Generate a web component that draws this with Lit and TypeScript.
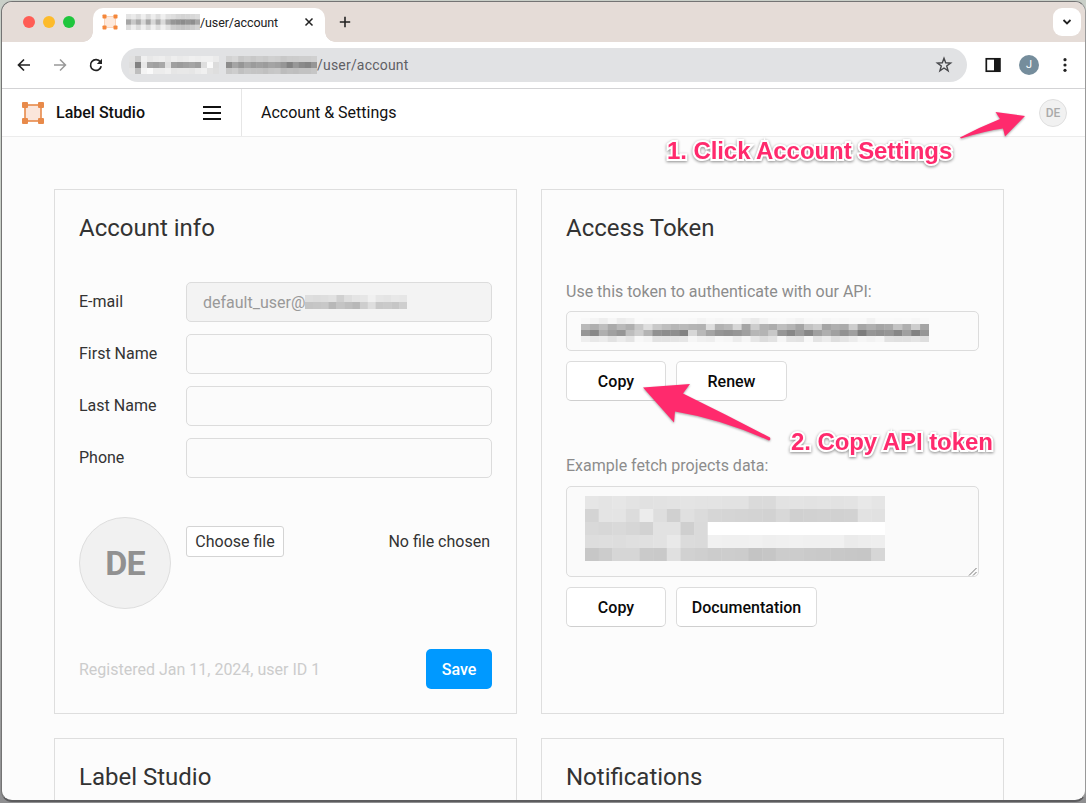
import { LitElement, html, svg, css } from "lit";
import { customElement } from "lit/decorators.js";

type Cells = number[][];

/* Redacted text: a grid of grey levels, one row of cells per line. */
const mosaic = (rows: Cells, w: number, h: number) => {
  const ch = h / rows.length;
  return html`<svg class="mosaic" width=${w} height=${h} viewBox="0 0 ${w} ${h}">
    ${rows.map((r, y) => r.map((v, x) => svg`<rect x=${(x * w) / r.length} y=${y * ch} width=${Math.min(w / r.length + 0.4, w - (x * w) / r.length)} height=${ch + (y < rows.length - 1 ? 0.4 : 0)} fill="rgb(${v},${v},${v})"></rect>`))}
  </svg>`;
};

const TAB: Cells = [
  [228, 235, 222, 240, 220, 238, 222, 240, 225, 222, 215, 212, 214, 216, 220],
  [165, 200, 170, 215, 165, 215, 172, 218, 172, 150, 145, 140, 148, 142, 165],
  [220, 238, 220, 240, 220, 240, 222, 240, 225, 205, 200, 196, 200, 204, 212],
];
const URL_A: Cells = [
  [225, 205, 240, 232, 236, 238, 232, 238, 234, 236, 240, 238, 240, 240, 235],
  [222, 130, 232, 165, 160, 168, 224, 160, 155, 160, 165, 158, 222, 250, 220],
  [228, 190, 244, 250, 236, 236, 240, 230, 232, 232, 230, 236, 240, 226, 222],
];
const URL_B: Cells = [
  [210, 215, 200, 205, 200, 205, 202, 208, 206, 200, 204, 204, 206, 206, 208],
  [140, 165, 150, 165, 155, 160, 156, 164, 160, 150, 130, 152, 138, 132, 150],
  [200, 205, 192, 198, 196, 196, 192, 198, 200, 188, 192, 190, 194, 194, 198],
];
const MAIL: Cells = [
  [222, 220, 222, 225, 208, 222, 228, 230, 240, 230, 228, 232, 230],
  [196, 198, 200, 184, 196, 190, 184, 206, 222, 200, 202, 198, 206],
];
const TOKEN: Cells = [
  [248, 244, 238, 246, 236, 240, 250, 248, 249, 249, 249, 249, 248, 244, 248, 246, 248, 249, 240, 234, 242, 248, 249, 246, 242, 248, 249, 246, 248, 247, 249, 249, 242, 249, 249, 248, 249, 246, 249],
  [185, 175, 190, 170, 185, 175, 200, 222, 200, 190, 182, 185, 180, 178, 222, 178, 185, 215, 165, 205, 178, 172, 190, 180, 165, 195, 205, 165, 175, 170, 205, 165, 175, 165, 170, 195, 175, 205, 165],
  [150, 135, 175, 160, 150, 190, 205, 180, 145, 140, 142, 130, 215, 185, 165, 150, 145, 150, 160, 182, 180, 200, 150, 135, 155, 135, 160, 175, 160, 145, 160, 125, 150, 145, 150, 135, 160, 130, 150],
  [238, 232, 236, 226, 236, 228, 248, 244, 226, 226, 228, 230, 246, 240, 238, 248, 246, 236, 246, 230, 220, 226, 246, 228, 226, 248, 228, 236, 222, 228, 236, 246, 242, 246, 226, 224, 224, 228, 222],
];
const CODE: Cells = [
  [230, 228, 230, 227, 225, 226, 227, 228, 227, 227, 226, 226, 218, 218, 226, 227, 226, 227, 226, 227, 232, 229],
  [212, 228, 228, 220, 236, 222, 208, 224, 219, 214, 213, 212, 211, 210, 216, 208, 209, 210, 209, 210, 226, 225],
  [217, 215, 217, 214, 210, 226, 226, 207, 218, 255, 255, 255, 255, 255, 255, 255, 255, 255, 255, 255, 255, 255],
  [221, 222, 221, 223, 224, 226, 233, 219, 218, 241, 240, 240, 241, 239, 240, 241, 240, 240, 241, 235, 237, 238],
  [199, 204, 214, 214, 202, 201, 224, 209, 207, 204, 205, 204, 196, 198, 204, 204, 202, 201, 200, 199, 198, 214],
];

@customElement("app-root")
export class AppRoot extends LitElement {
  static styles = css`
    * { box-sizing: border-box; }
    :host { display: block; width: 1086px; height: 803px; overflow: hidden; position: relative; background: linear-gradient(#c9cfc8, #c9cfc8 50%, #8e8e90); padding: 1px 0 0 1px; font-family: Roboto, sans-serif; font-size: 16px; color: #333; }
    .window { width: 1085px; height: 801px; border: 1px solid #747474; border-right-color: #999; border-bottom: 2px solid #5c5c5e; border-radius: 11px; overflow: hidden; background: #fcfcfc; display: flex; flex-direction: column; }
    .mosaic { display: block; flex: none; }
    .tabs { height: 40px; flex: none; background: #e5dcd7; display: flex; align-items: flex-start; padding-left: 21px; }
    .lights { display: flex; gap: 8px; padding-top: 14px; width: 70px; }
    .dot { width: 12px; height: 12px; border-radius: 50%; }
    .red { background: #ff5d55; } .amber { background: #fdbb2b; } .green { background: #1fc63d; }
    .tab { margin-top: 6px; width: 232px; height: 34px; background: #fff; border-radius: 10px 10px 0 0; display: flex; align-items: center; padding: 0 0 6px 9px; position: relative; }
    .tab::before, .tab::after { content: ""; position: absolute; bottom: 0; width: 10px; height: 10px; }
    .tab::before { left: -10px; background: radial-gradient(circle at 0 0, transparent 9.5px, #fff 10px); }
    .tab::after { right: -10px; background: radial-gradient(circle at 100% 0, transparent 9.5px, #fff 10px); }
    .tab .mosaic { margin-left: 8px; }
    .tabtext { font-size: 12.5px; color: #222; letter-spacing: -0.11px; width: 104px; white-space: nowrap; }
    .plus { margin: 14px 0 0 14px; }
    .drop { margin: 6px 4px 0 auto; width: 28px; height: 28px; border-radius: 9px; background: #fff; display: grid; place-items: center; }
    .bar { height: 47px; flex: none; background: #fff; border-bottom: 1px solid #d3d3d5; display: flex; align-items: center; padding: 0 0 1px 14px; }
    .bar > svg { flex: none; }
    .nav { display: flex; gap: 20px; width: 105px; }
    .url { width: 846px; height: 34px; border-radius: 17px; background: #e1e2e4; display: flex; align-items: center; padding: 0 14px 0 8px; font-size: 14px; color: #5f6064; }
    .urltext { letter-spacing: 0.2px; flex: 1; }
    .urlgap { margin-left: 7px; }
    .panel { margin-left: 17px; }
    .me { width: 20px; height: 20px; margin: 0 23px 0 17px; border-radius: 50%; background: #758d9c; color: #fff; font-size: 11px; display: grid; place-items: center; }
    .header { height: 48px; flex: none; background: #fff; border-bottom: 1px solid #ececec; display: flex; align-items: center; color: #111; }
    .brand { width: 240px; height: 47px; border-right: 1px solid #e6e6e6; display: flex; align-items: center; padding: 0 20px 0 20px; }
    .brandname { margin-left: 12px; font-weight: 500; font-size: 16px; letter-spacing: 0; flex: 1; }
    .crumb { margin-left: 19px; letter-spacing: 0; flex: 1; }
    .chip { width: 28px; height: 28px; margin-right: 18px; border-radius: 50%; border: 1px solid #dfdfdf; background: #f1f1f1; color: #aaa; font-size: 12px; font-weight: 500; display: grid; place-items: center; }
    .page { display: grid; grid-template-columns: 463px 463px; grid-template-rows: 525px 120px; gap: 24px; padding: 52px 0 0 52px; flex: none; }
    .card { border: 1px solid #dedede; padding: 24px; }
    h2 { margin: 0; font-size: 24px; line-height: 28px; font-weight: 400; letter-spacing: 0; }
    .fields { display: grid; grid-template-columns: 107px 306px; row-gap: 12px; margin-top: 40px; }
    label { line-height: 40px; letter-spacing: 0; }
    .input { height: 40px; border: 1px solid #dcdcdc; border-radius: 5px; background: #fbfbfb; display: flex; align-items: center; padding-left: 16px; }
    .off { background: #f3f3f3; color: #999; letter-spacing: 0; }
    .photo { display: flex; margin-top: 39px; height: 92px; }
    .avatar { width: 92px; height: 92px; margin-right: 15px; border-radius: 50%; border: 1px solid #dedede; background: #f1f1f1; color: #919191; font-size: 34px; font-weight: 700; display: grid; place-items: center; letter-spacing: -0.8px; }
    .file { width: 98px; height: 31px; margin-top: 9px; border: 1px solid #d4d4d4; border-radius: 3px; background: #fff; display: grid; place-items: center; letter-spacing: 0; }
    .nofile { margin: 15px 2px 0 auto; letter-spacing: 0; }
    .foot { display: flex; align-items: center; justify-content: space-between; margin-top: 40px; color: #ccc; letter-spacing: 0; }
    .btn { height: 40px; border: 1px solid #dcdcdc; border-bottom-color: #cfcfcf; border-radius: 5px; background: #fff; color: #0a0a0a; font-weight: 500; display: grid; place-items: center; letter-spacing: 0; }
    .save { width: 66px; border: 0; background: #0099ff; color: #fff; }
    .hint { color: #8c8c8c; line-height: 20px; letter-spacing: 0; }
    .h1 { margin-top: 40px; margin-bottom: 9px; }
    .h2 { margin-top: 55px; margin-bottom: 10px; }
    .token { padding: 0 0 2px 14px; }
    .row { display: flex; gap: 10px; margin-top: 10px; }
    .w100 { width: 100px; } .w111 { width: 111px; } .w141 { width: 141px; }
    .area { height: 91px; display: flex; border: 1px solid #dcdcdc; border-radius: 5px; background: #fafafa; padding: 9px 0 0 18px; position: relative; }
    .grip { position: absolute; right: 1px; bottom: 0; }
    .note { position: absolute; font: 700 24px/28px "Liberation Sans", sans-serif; color: #ff2a6d; white-space: nowrap; -webkit-text-stroke: 4px #fff; paint-order: stroke fill; filter: drop-shadow(0 1px 1.5px rgba(0,0,0,.45)); }
    .n1 { left: 667px; top: 137px; letter-spacing: -0.08px; } .n2 { left: 791px; top: 428px; letter-spacing: -0.08px; }
    .arrows { position: absolute; left: 0; top: 0; filter: drop-shadow(0 1px 1px rgba(0,0,0,.35)); }
  `;

  logo(size: number, main: string, fill: string) {
    return html`<svg width=${size} height=${size} viewBox="0 0 22 22">
      <rect x="3" y="3" width="16" height="16" fill=${fill} stroke=${main} stroke-width="1.6"></rect>
      ${[0, 16].map(x => [0, 16].map(y => svg`<rect x=${x} y=${y} width="6" height="6" rx="1" fill=${main}></rect>`))}
    </svg>`;
  }

  tabLogo() {
    const c = "#f5873a";
    return html`<svg width="16" height="16" viewBox="0 0 16 16">
      <rect x="2.500" y="2.500" width="11" height="11" fill="#fde9dc" stroke="#fbd3b8" stroke-width="1"></rect>
      ${[0.5, 11.5].map(x => [0.5, 11.5].map(y => svg`<rect x=${x} y=${y} width="4" height="4" rx=".8" fill=${c}></rect>`))}
    </svg>`;
  }

  render() {
    return html`
      <div class="window">
        <div class="tabs">
          <div class="lights"><i class="dot red"></i><i class="dot amber"></i><i class="dot green"></i></div>
          <div class="tab">
            ${this.tabLogo()}
            ${mosaic(TAB, 74, 16)}
            <span class="tabtext">/user/account</span>
            <svg width="10" height="10" viewBox="0 0 10 10"><path d="M1.5 1.5l7 7M8.5 1.5l-7 7" stroke="#222" stroke-width="1.5"></path></svg>
          </div>
          <svg class="plus" width="12" height="12" viewBox="0 0 12 12"><path d="M6 .8v10.4M.8 6h10.4" stroke="#222" stroke-width="1.6"></path></svg>
          <div class="drop"><svg width="10" height="8" viewBox="0 0 10 8"><path d="M1.5 2l3.5 3.5L8.500 2" fill="none" stroke="#222" stroke-width="1.8"></path></svg></div>
        </div>
        <div class="bar">
          <div class="nav">
            <svg width="16" height="16" viewBox="0 0 16 16"><path d="M14 8H3M8 2.500L2.500 8 8 13.500" fill="none" stroke="#222" stroke-width="1.700"></path></svg>
            <svg width="16" height="16" viewBox="0 0 16 16"><path d="M2 8h11M8 2.500L13.500 8 8 13.500" fill="none" stroke="#999" stroke-width="1.500"></path></svg>
            <svg width="16" height="16" viewBox="0 0 16 16"><path d="M13.200 9.200A5.400 5.400 0 1 1 12.400 5" fill="none" stroke="#222" stroke-width="1.700"></path><path d="M14 1.800v5.200H8.800z" fill="#222"></path></svg>
          </div>
          <div class="url">
            ${mosaic(URL_A, 90, 18)}<span class="urlgap"></span>${mosaic(URL_B, 91, 18)}
            <span class="urltext">/user/account</span>
            <svg width="18" height="18" viewBox="0 0 18 18"><path d="M9 2.200l1.700 4.600 4.900.2-3.900 3 1.400 4.800L9 12l-4.100 2.800L6.300 10l-3.900-3 4.900-.2z" fill="none" stroke="#47484b" stroke-width="1.400"></path></svg>
          </div>
          <svg class="panel" width="18" height="16" viewBox="0 0 18 16"><rect x="2.300" y="1.800" width="13.400" height="12.400" fill="#fff" stroke="#171717" stroke-width="1.700"></rect><path d="M10 1h6.500v14H10z" fill="#171717"></path></svg>
          <div class="me">J</div>
          <svg width="6" height="16" viewBox="0 0 6 16"><g fill="#222"><circle cx="3" cy="2.700" r="1.600"></circle><circle cx="3" cy="8" r="1.600"></circle><circle cx="3" cy="13.300" r="1.600"></circle></g></svg>
        </div>
        <div class="header">
          <div class="brand">
            ${this.logo(22, "#e88a4a", "#fbe6db")}
            <span class="brandname">Label Studio</span>
            <svg width="18" height="16" viewBox="0 0 18 16"><path d="M0 2h18M0 8h18M0 14h18" stroke="#111" stroke-width="1.900"></path></svg>
          </div>
          <span class="crumb">Account &amp; Settings</span>
          <div class="chip">DE</div>
        </div>
        <div class="page">
          <section class="card">
            <h2>Account info</h2>
            <div class="fields">
              <label>E-mail</label><div class="input off">default_user@${mosaic(MAIL, 102, 14)}</div>
              <label>First Name</label><div class="input"></div>
              <label>Last Name</label><div class="input"></div>
              <label>Phone</label><div class="input"></div>
            </div>
            <div class="photo">
              <div class="avatar">DE</div>
              <div class="file">Choose file</div>
              <span class="nofile">No file chosen</span>
            </div>
            <div class="foot"><span>Registered Jan 11, 2024, user ID 1</span><div class="btn save">Save</div></div>
          </section>
          <section class="card">
            <h2>Access Token</h2>
            <div class="hint h1">Use this token to authenticate with our API:</div>
            <div class="input token">${mosaic(TOKEN, 348, 24)}</div>
            <div class="row"><div class="btn w100">Copy</div><div class="btn w111">Renew</div></div>
            <div class="hint h2">Example fetch projects data:</div>
            <div class="area">${mosaic(CODE, 300, 65)}
              <svg class="grip" width="9" height="9" viewBox="0 0 9 9"><path d="M1 8.500L8.500 1M5 8.500L8.500 5" stroke="#777" stroke-width="1"></path></svg>
            </div>
            <div class="row"><div class="btn w100">Copy</div><div class="btn w141">Documentation</div></div>
          </section>
          <section class="card"><h2>Label Studio</h2></section>
          <section class="card"><h2>Notifications</h2></section>
        </div>
      </div>
      <svg class="arrows" width="1086" height="803" viewBox="0 0 1086 803"><g fill="#ff2a6d">
        <path d="M960 137.500Q980 127 1000 119L995.500 112 1025 116 1005 136.500 1003 128.500Q985 131 961 138.500z"></path>
        <path d="M643 387.500L690 384 683 393.500Q727 415 770 437.500 771 440 769 440.500 721 419 675 411.500L674 422.500z"></path>
      </g></svg>
      <div class="note n1">1. Click Account Settings</div>
      <div class="note n2">2. Copy API token</div>
    `;
  }
}
